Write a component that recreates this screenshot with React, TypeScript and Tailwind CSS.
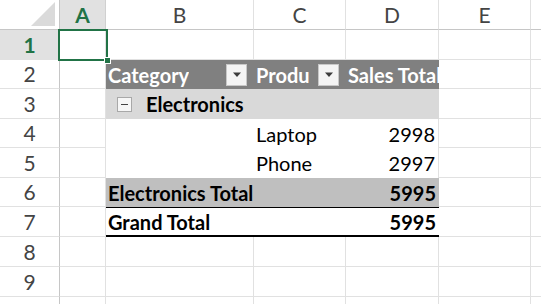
import React from "react";

const font = { fontFamily: "Lato, 'Noto Sans', sans-serif" };

function DropBtn() {
  return (
    <div className="ml-auto mr-[7px] w-[21px] h-[22px] shrink-0 bg-[#f4f4f4] border border-[#c8c8c8] flex items-center justify-center">
      <svg width="10" height="6" viewBox="0 0 10 6">
        <polygon points="1,0.5 9,0.5 5,5" fill="#3c3c3c" />
      </svg>
    </div>
  );
}

export default function App() {
  const cols = ["A", "B", "C", "D", "E", ""];
  const rows = [1, 2, 3, 4, 5, 6, 7, 8, 9, 10];
  return (
    <div
      className="w-[541px] h-[304px] overflow-hidden bg-white relative text-black"
      style={font}
    >
      <div className="grid grid-cols-[60px_46px_148px_92px_93px_92px_1fr] grid-rows-[30px_30px_29px_30px_29px_30px_29px_30px_30px_30px_30px] w-[600px]">
        {/* corner */}
        <div className="col-start-1 row-start-1 border-r border-b border-[#c6c6c6] relative bg-white">
          <svg className="absolute right-[4px] bottom-[3px]" width="24" height="24" viewBox="0 0 24 24">
            <polygon points="24,0 24,24 0,24" fill="#dadada" />
          </svg>
        </div>
        {cols.map((c, i) => (
          <div
            key={i}
            className={
              "row-start-1 border-r border-b flex items-center justify-center text-[21px] " +
              (i === 0
                ? "bg-[#e1e1e1] text-[#217346] font-bold border-r-[#d0d0d0] border-b-[#c6c6c6]"
                : "bg-white text-[#444444] border-r-[#e1e1e1] border-b-[#c6c6c6]")
            }
            style={{ gridColumnStart: i + 2 }}
          >
            {c}
          </div>
        ))}
        {rows.map((r, ri) => (
          <React.Fragment key={r}>
            <div
              className={
                "col-start-1 border-r border-b border-r-[#c6c6c6] border-b-[#e1e1e1] flex items-center justify-center text-[21px] " +
                (r === 1 ? "bg-[#e1e1e1] text-[#217346] font-bold" : "bg-white text-[#444444]")
              }
              style={{ gridRowStart: ri + 2 }}
            >
              {r < 10 ? r : ""}
            </div>
            {cols.map((c, ci) => (
              <div
                key={ci}
                className="border-r border-b border-[#e1e1e1]"
                style={{ gridRowStart: ri + 2, gridColumnStart: ci + 2 }}
              />
            ))}
          </React.Fragment>
        ))}

        {/* pivot table B2:D7 */}
        <div className="col-start-3 col-end-6 row-start-3 row-end-9 z-10 grid grid-cols-[148px_92px_93px] grid-rows-[29px_30px_29px_30px_29px_30px] text-[20px]">
          {/* header */}
          <div className="bg-[#808080] text-white font-bold flex items-center pl-[2px] overflow-hidden">
            <span className="min-w-0 overflow-hidden whitespace-nowrap">Category</span>
            <DropBtn />
          </div>
          <div className="bg-[#808080] text-white font-bold flex items-center pl-[2px] overflow-hidden">
            <span className="min-w-0 overflow-hidden whitespace-nowrap">Produ</span>
            <DropBtn />
          </div>
          <div className="bg-[#808080] text-white font-bold flex items-center pl-[2px] overflow-hidden whitespace-nowrap">
            Sales Total
          </div>
          {/* row 3 */}
          <div className="col-span-3 bg-[#d9d9d9] font-bold flex items-center pl-[11px]">
            <div className="w-[15px] h-[15px] border border-[#a8a8a8] bg-[#f6f6f6] flex items-center justify-center mr-[14px]">
              <div className="w-[7px] h-[1px] bg-[#444444]" />
            </div>
            Electronics
          </div>
          {/* row 4 */}
          <div className="bg-white" />
          <div className="bg-white flex items-center pl-[2px]">Laptop</div>
          <div className="bg-white border-r border-[#e1e1e1] flex items-center justify-end pr-[3px]">2998</div>
          {/* row 5 */}
          <div className="bg-white" />
          <div className="bg-white flex items-center pl-[2px]">Phone</div>
          <div className="bg-white border-r border-[#e1e1e1] flex items-center justify-end pr-[3px]">2997</div>
          {/* row 6 */}
          <div className="col-span-2 bg-[#bfbfbf] font-bold flex items-center pl-[2px] whitespace-nowrap">
            Electronics Total
          </div>
          <div className="bg-[#bfbfbf] font-bold flex items-center justify-end pr-[3px]">5995</div>
          {/* row 7 */}
          <div className="col-span-2 bg-white border-t border-b-2 border-black font-bold flex items-center pl-[2px] whitespace-nowrap">
            Grand Total
          </div>
          <div className="bg-white border-t border-b-2 border-black font-bold flex items-center justify-end pr-[3px]">5995</div>
        </div>
      </div>

      {/* selection around A1 */}
      <div className="absolute left-[58px] top-[29px] w-[50px] h-[32px] border-2 border-[#217346] z-20" />
      <div className="absolute left-[104px] top-[57px] w-[7px] h-[7px] bg-[#217346] border border-white z-30" />
    </div>
  );
}
